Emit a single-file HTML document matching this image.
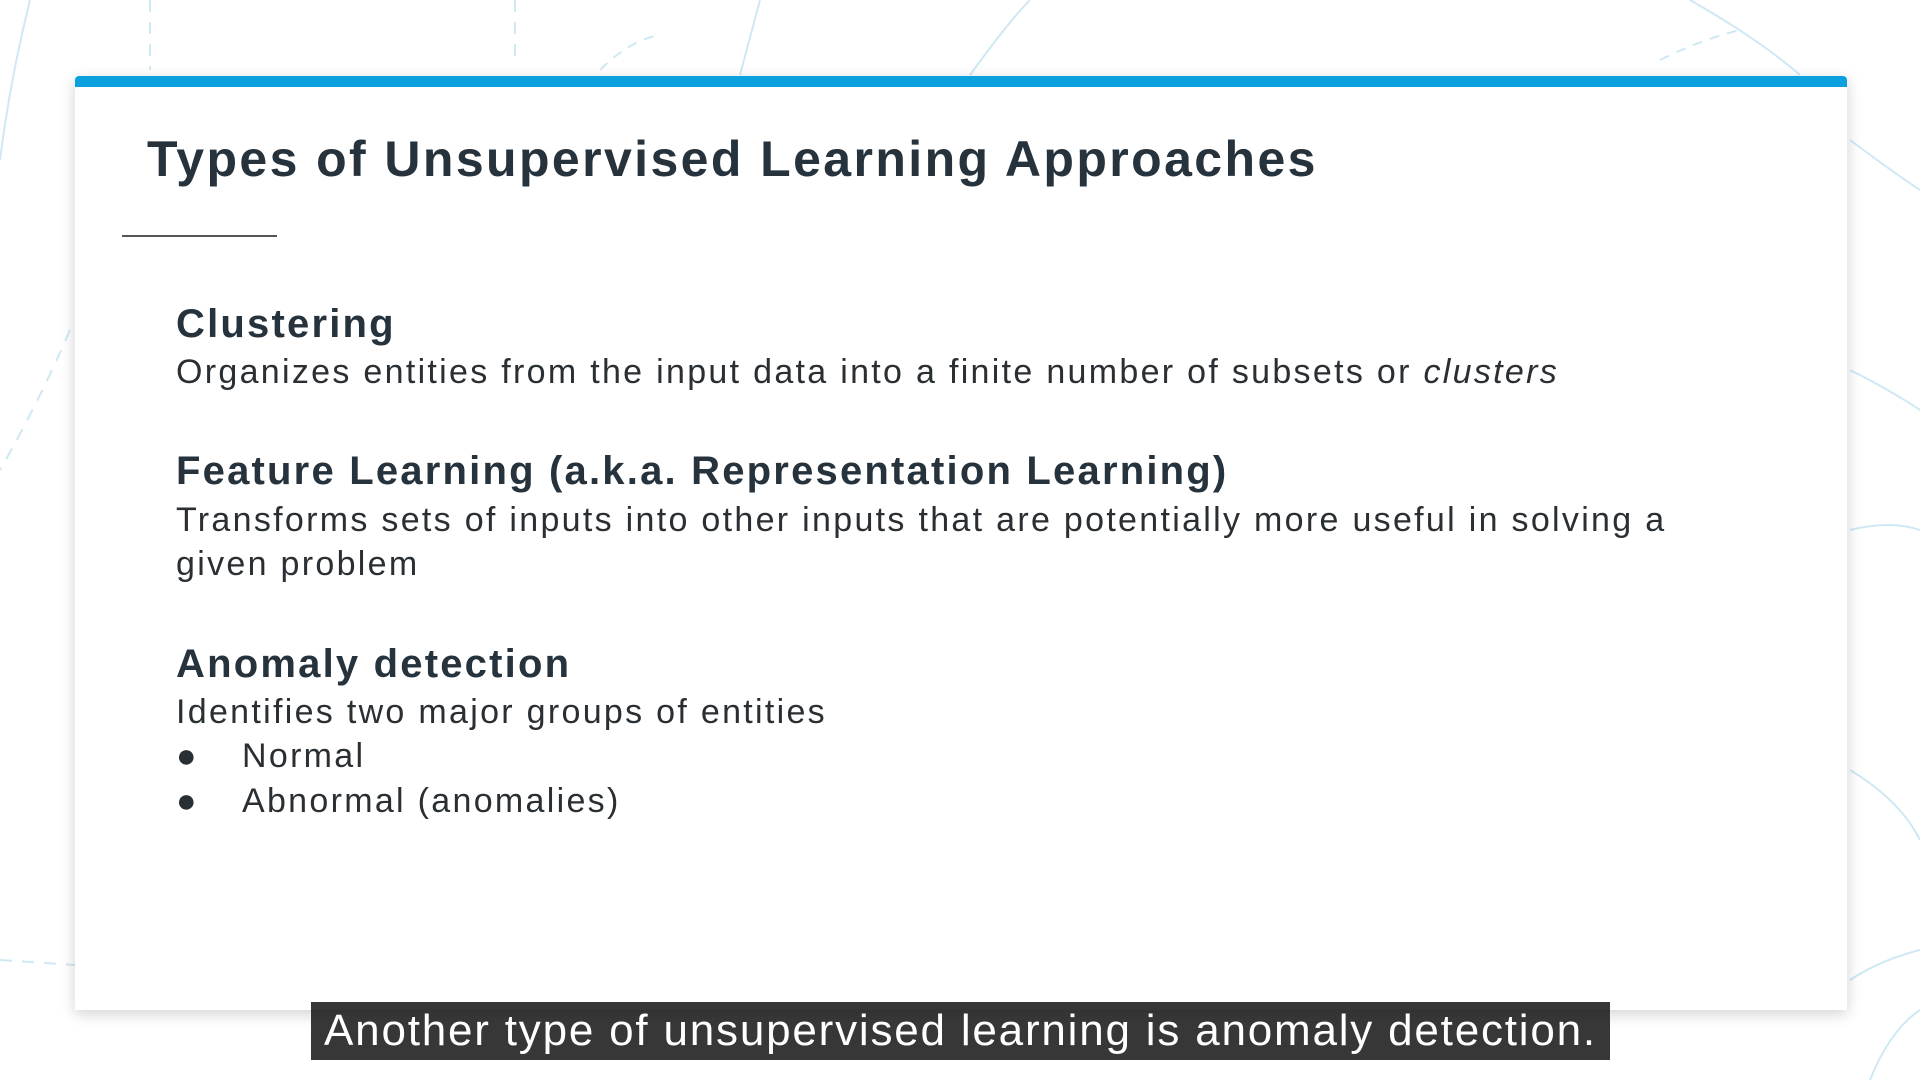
<!DOCTYPE html>
<html><head><meta charset="utf-8"><style>
html,body{margin:0;padding:0;width:1920px;height:1080px;overflow:hidden;background:#fff;font-family:"Liberation Sans",sans-serif;}
.bg{position:absolute;left:0;top:0}
.card{position:absolute;left:75px;top:76px;width:1772px;height:934px;background:#fff;box-shadow:0 4px 14px rgba(0,0,0,0.18);}
.bar{position:absolute;left:0;top:0;width:100%;height:11px;background:#0aa1de;border-radius:4px 4px 0 0}
.t{position:absolute;color:#26323c;white-space:nowrap}
h1{position:absolute;left:72px;top:54px;margin:0;font-size:50px;font-weight:bold;color:#26323c;letter-spacing:2.4px}
.rule{position:absolute;left:47px;top:159px;width:155px;height:2px;background:#555}
.h{font-weight:bold;font-size:40px;letter-spacing:2.2px}
.b{font-size:34px;color:#2a2f33;letter-spacing:2.3px}
.sub{position:absolute;left:311px;top:1002px;width:1299px;height:58px;background:rgba(20,20,20,0.85);color:#fff;font-size:44px;line-height:58px;text-align:center;white-space:nowrap;letter-spacing:1.8px}
</style></head><body>
<svg class="bg" width="1920" height="1080" fill="none" stroke="#cfe9f4" stroke-width="2">
<path d="M30 0 Q10 80 0 160"/><path d="M150 0 L150 70" stroke-dasharray="12 10"/><path d="M515 0 L515 60" stroke-dasharray="12 10"/>
<path d="M600 70 Q630 40 660 35" stroke-dasharray="10 8"/><path d="M740 75 L760 0"/><path d="M970 75 Q1010 20 1030 0"/>
<path d="M1660 60 Q1700 40 1740 30" stroke-dasharray="10 8"/><path d="M1690 0 Q1760 40 1800 75"/>
<path d="M1850 140 Q1890 170 1920 190"/><path d="M1850 370 Q1890 390 1920 410"/><path d="M1850 530 Q1890 520 1920 530"/>
<path d="M1850 770 Q1900 800 1920 840"/><path d="M0 960 L75 965" stroke-dasharray="12 10"/><path d="M1850 980 Q1880 960 1920 950"/>
<path d="M70 330 Q40 400 0 470" stroke-dasharray="12 10"/><path d="M1870 1080 Q1890 1030 1920 1010"/>
</svg>
<div class="card"><div class="bar"></div>
<h1>Types of Unsupervised Learning Approaches</h1>
<div class="rule"></div>
<div class="t h" style="left:101px;top:226px">Clustering</div>
<div class="t b" style="left:101px;top:277px">Organizes entities from the input data into a finite number of subsets or <i>clusters</i></div>
<div class="t h" style="left:101px;top:373px">Feature Learning (a.k.a. Representation Learning)</div>
<div class="t b" style="left:101px;top:425px">Transforms sets of inputs into other inputs that are potentially more useful in solving a</div>
<div class="t b" style="left:101px;top:469px">given problem</div>
<div class="t h" style="left:101px;top:566px">Anomaly detection</div>
<div class="t b" style="left:101px;top:617px">Identifies two major groups of entities</div>
<div class="t b" style="left:101px;top:661px">●</div><div class="t b" style="left:167px;top:661px">Normal</div>
<div class="t b" style="left:101px;top:706px">●</div><div class="t b" style="left:167px;top:706px">Abnormal (anomalies)</div>
</div>
<div class="sub">Another type of unsupervised learning is anomaly detection.</div>
</body></html>
